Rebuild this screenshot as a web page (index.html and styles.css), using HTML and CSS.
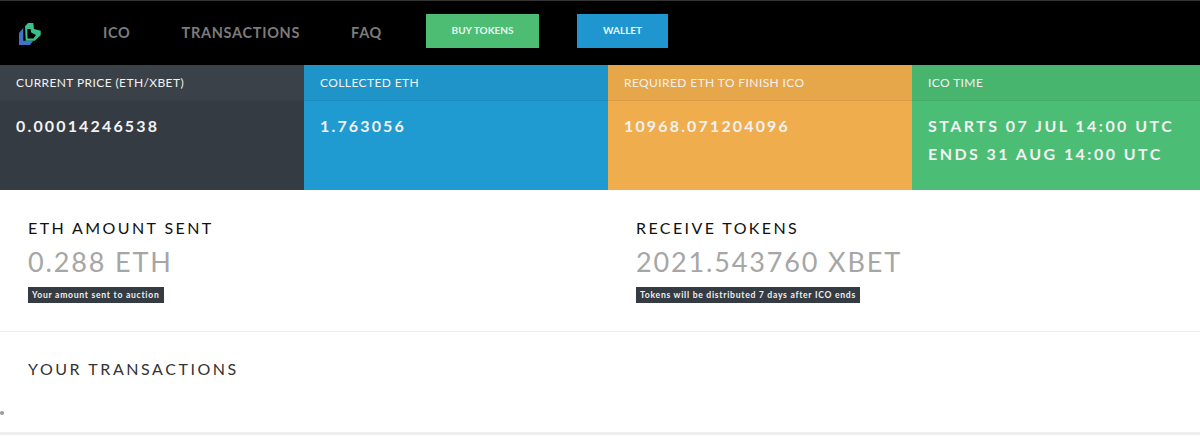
FILE: index.html
```html
<!DOCTYPE html>
<html lang="en">
<head>
  <meta charset="UTF-8" />
  <title>ICO Dashboard</title>
  <link rel="stylesheet" href="styles.css">
</head>
<body>
  <header class="topbar">
    <svg class="logo" viewBox="0 0 24 24" width="24" height="24">
      <path fill="#3f74c4" d="M1 11 L5.3 6 L5.3 18.7 L15.3 18.7 L12 23 L1 23 Z"/>
      <path fill="#38c08c" fill-rule="evenodd" d="M7 4.3 L10 1 L15.3 1 L16 7 L22.7 8.7 L22.7 13.3 L16.7 18.7 L7.7 18.7 Z M9.2 7 L9.6 16.6 L15.4 16.6 L18 13 L13.2 10.6 L12.6 7 Z"/>
    </svg>
    <nav class="nav">
      <a href="#">ICO</a>
      <a href="#">TRANSACTIONS</a>
      <a href="#">FAQ</a>
    </nav>
    <a href="#" class="btn btn-buy">BUY TOKENS</a>
    <a href="#" class="btn btn-wallet">WALLET</a>
  </header>

  <!-- Stat tiles -->
  <div class="stats">
    <div class="stat dark">
      <div class="stat-title">CURRENT PRICE (ETH/XBET)</div>
      <div class="stat-body">0.00014246538</div>
    </div>
    <div class="stat blue">
      <div class="stat-title">COLLECTED ETH</div>
      <div class="stat-body">1.763056</div>
    </div>
    <div class="stat orange">
      <div class="stat-title">REQUIRED ETH TO FINISH ICO</div>
      <div class="stat-body">10968.071204096</div>
    </div>
    <div class="stat green">
      <div class="stat-title">ICO TIME</div>
      <div class="stat-body">STARTS 07 JUL 14:00 UTC<br>ENDS 31 AUG 14:00 UTC</div>
    </div>
  </div>

  <!-- Amounts -->
  <div class="amounts">
    <div class="amount">
      <h3>ETH AMOUNT SENT</h3>
      <div class="value">0.288 ETH</div>
      <span class="note">Your amount sent to auction</span>
    </div>
    <div class="amount">
      <h3>RECEIVE TOKENS</h3>
      <div class="value">2021.543760 XBET</div>
      <span class="note">Tokens will be distributed 7 days after ICO ends</span>
    </div>
  </div>

  <div class="transactions">
    <h3>YOUR TRANSACTIONS</h3>
    <span class="dot"></span>
  </div>
</body>
</html>
```

FILE: styles.css
```css
body {
  font-family: "Lato", "Open Sans", sans-serif;
  background: white;
  color: #222;
  margin: 0;
  padding: 0;
  height: 436px;
  overflow: hidden;
}
.topbar {
  display: flex;
  align-items: flex-start;
  height: 64px;
  background: #000;
  border-top: 1px solid #333;
}
.logo {
  margin: 21px 0 0 18px;
}
.nav {
  display: flex;
  gap: 51px;
  margin: 22px 0 0 61px;
}
.nav a {
  color: #7b7b7b;
  font-size: 14.5px;
  font-weight: 700;
  letter-spacing: 0.7px;
  line-height: 20px;
  text-decoration: none;
}
.btn {
  display: block;
  height: 34px;
  margin-top: 13px;
  color: #e8f6f2;
  font-size: 10px;
  font-weight: 700;
  line-height: 33px;
  text-align: center;
  text-decoration: none;
}
.btn-buy {
  width: 113px;
  margin-left: 44px;
  background: #4dbd74;
}
.btn-wallet {
  width: 91px;
  margin-left: 38px;
  background: #1f96d0;
}
.stats {
  display: grid;
  grid-template-columns: repeat(4, 304px);
  height: 125px;
}
.stat {
  color: #f2f2f2;
}
.stat-title {
  height: 35px;
  padding-left: 16px;
  font-size: 12px;
  letter-spacing: 0.4px;
  line-height: 36px;
  border-bottom: 1px solid rgba(0,0,0,0.05);
  background: rgba(0,0,0,0.04);
}
.dark .stat-title {
  background: rgba(255,255,255,0.03);
}
.stat-body {
  padding: 11px 16px 0;
  font-size: 16px;
  font-weight: 700;
  letter-spacing: 2.15px;
  line-height: 28px;
}
.green .stat-body {
  letter-spacing: 2.45px;
}
.dark { background: #353b43; }
.blue { background: #209bd2; }
.orange { background: #f0ad4e; }
.green { background: #4bbd74; }
.amounts {
  display: grid;
  grid-template-columns: 608px 592px;
  height: 141px;
  border-bottom: 1px solid #eee;
}
.amount {
  padding: 28px 0 0 28px;
}
h3 {
  margin: 0;
  font-size: 16px;
  font-weight: 400;
  letter-spacing: 2.4px;
  line-height: 20px;
  color: #111;
}
.value {
  margin-top: 6px;
  font-size: 27px;
  letter-spacing: 1.85px;
  line-height: 36px;
  color: #a6a6a6;
}
.note {
  display: inline-block;
  margin-top: 7px;
  padding: 0 4px;
  background: #353b43;
  color: #f0f0f0;
  font-size: 8.6px;
  font-weight: 700;
  letter-spacing: 0.72px;
  line-height: 16px;
}
.transactions {
  position: relative;
  height: 103px;
  padding: 27px 0 0 28px;
  box-sizing: border-box;
  border-bottom: 3px solid #eee;
}
.transactions h3 {
  color: #333;
  letter-spacing: 2.55px;
}
.dot {
  position: absolute;
  left: 0;
  top: 79px;
  width: 4px;
  height: 4px;
  border-radius: 50%;
  background: #999;
}
```
